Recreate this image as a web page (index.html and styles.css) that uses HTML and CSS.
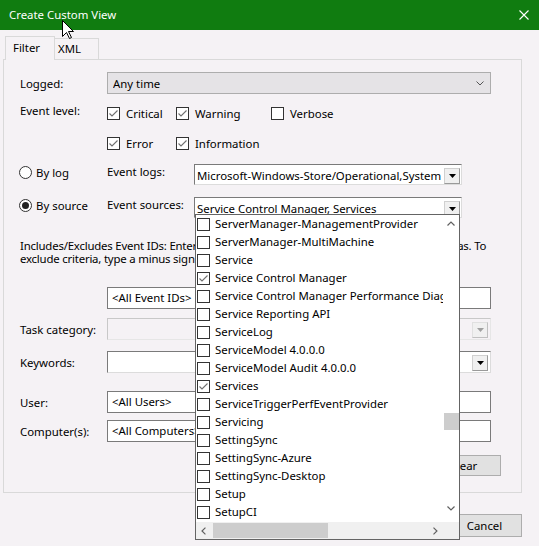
FILE: index.html
```html
<!DOCTYPE html>
<html>
<head>
<meta charset="utf-8">
<link rel="stylesheet" href="styles.css">
</head>
<body>
<div class="titlebar">
  <span class="title">Create Custom View</span>
  <svg class="close" width="10" height="10" viewBox="0 0 10 10"><path d="M0.5 0.5 L9.5 9.5 M9.5 0.5 L0.5 9.5" stroke="#fff" stroke-width="1.1" fill="none"/></svg>
</div>
<svg class="cursor" width="13" height="20" viewBox="0 0 13 20"><path d="M0.5 0.5 L0.5 16.5 L4.5 12.5 L7.5 18.5 L9.5 17.5 L6.5 11.5 L11.5 11.5 Z" fill="#fff" stroke="#000" stroke-width="1"/></svg>
<div class="dialog">
  <div class="tabs">
    <div class="tab active">Filter</div>
    <div class="tab">XML</div>
  </div>
  <div class="panel">
    <div class="row">
      <span class="label">Logged:</span>
      <div class="select">
        <span class="grow">Any time</span>
        <svg width="8" height="5" viewBox="0 0 8 5"><path d="M0.5 0.5 L4 4 L7.5 0.5" stroke="#555" fill="none" stroke-width="1"/></svg>
      </div>
    </div>
    <div class="levels">
      <span class="label level-label">Event level:</span>
      <div class="checks">
        <div class="chk"><span class="cb on"><svg viewBox="0 0 11 11"><path d="M1.5 5.5 L4 8 L9.5 2.5"/></svg></span>Critical</div>
        <div class="chk"><span class="cb on"><svg viewBox="0 0 11 11"><path d="M1.5 5.5 L4 8 L9.5 2.5"/></svg></span>Warning</div>
        <div class="chk"><span class="cb"></span>Verbose</div>
        <div class="chk"><span class="cb on"><svg viewBox="0 0 11 11"><path d="M1.5 5.5 L4 8 L9.5 2.5"/></svg></span>Error</div>
        <div class="chk"><span class="cb on"><svg viewBox="0 0 11 11"><path d="M1.5 5.5 L4 8 L9.5 2.5"/></svg></span>Information</div>
      </div>
    </div>
    <div class="srcrow">
      <div class="radio-label"><span class="radio"></span>By log</div>
      <span class="field-label">Event logs:</span>
      <div class="combo">
        <span class="grow">Microsoft-Windows-Store/Operational,System</span>
        <span class="dbtn"><svg width="7" height="4" viewBox="0 0 7 4"><path d="M0 0 H7 L3.5 4 Z" fill="#000"/></svg></span>
      </div>
    </div>
    <div class="srcrow second">
      <div class="radio-label"><span class="radio sel"></span>By source</div>
      <span class="field-label">Event sources:</span>
      <div class="combo source">
        <span class="grow">Service Control Manager, Services</span>
        <span class="dbtn"><svg width="7" height="4" viewBox="0 0 7 4"><path d="M0 0 H7 L3.5 4 Z" fill="#000"/></svg></span>
        <div class="dropdown">
          <div class="items">
            <div class="item"><span class="cb"></span>ServerManager-ManagementProvider</div>
            <div class="item"><span class="cb"></span>ServerManager-MultiMachine</div>
            <div class="item"><span class="cb"></span>Service</div>
            <div class="item"><span class="cb on"><svg viewBox="0 0 11 11"><path d="M1.5 5.5 L4 8 L9.5 2.5"/></svg></span>Service Control Manager</div>
            <div class="item"><span class="cb"></span>Service Control Manager Performance Diagnostic Provider</div>
            <div class="item"><span class="cb"></span>Service Reporting API</div>
            <div class="item"><span class="cb"></span>ServiceLog</div>
            <div class="item"><span class="cb"></span>ServiceModel 4.0.0.0</div>
            <div class="item"><span class="cb"></span>ServiceModel Audit 4.0.0.0</div>
            <div class="item"><span class="cb on"><svg viewBox="0 0 11 11"><path d="M1.5 5.5 L4 8 L9.5 2.5"/></svg></span>Services</div>
            <div class="item"><span class="cb"></span>ServiceTriggerPerfEventProvider</div>
            <div class="item"><span class="cb"></span>Servicing</div>
            <div class="item"><span class="cb"></span>SettingSync</div>
            <div class="item"><span class="cb"></span>SettingSync-Azure</div>
            <div class="item"><span class="cb"></span>SettingSync-Desktop</div>
            <div class="item"><span class="cb"></span>Setup</div>
            <div class="item"><span class="cb"></span>SetupCI</div>
          </div>
          <div class="vscroll">
            <svg width="8" height="5" viewBox="0 0 8 5"><path d="M0.5 4.5 L4 1 L7.5 4.5" stroke="#606060" fill="none" stroke-width="1.2"/></svg>
            <div class="vthumb"></div>
            <svg width="8" height="5" viewBox="0 0 8 5"><path d="M0.5 0.5 L4 4 L7.5 0.5" stroke="#606060" fill="none" stroke-width="1.2"/></svg>
          </div>
          <div class="hscroll">
            <svg width="5" height="8" viewBox="0 0 5 8"><path d="M4.5 0.5 L1 4 L4.5 7.5" stroke="#606060" fill="none" stroke-width="1.2"/></svg>
            <div class="hthumb"></div>
            <svg width="5" height="8" viewBox="0 0 5 8"><path d="M0.5 0.5 L4 4 L0.5 7.5" stroke="#606060" fill="none" stroke-width="1.2"/></svg>
          </div>
          <div class="corner"></div>
        </div>
      </div>
    </div>
    <p class="desc">Includes/Excludes Event IDs: Enter ID numbers and/or ID ranges separated by commas. To<br>exclude criteria, type a minus sign first. For example 1,3,5-99,-76</p>
    <div class="row ids">
      <span class="label"></span>
      <div class="input">&lt;All Event IDs&gt;</div>
    </div>
    <div class="row task">
      <span class="label">Task category:</span>
      <div class="combo wide disabled">
        <span class="grow"></span>
        <span class="dbtn"><svg width="7" height="4" viewBox="0 0 7 4"><path d="M0 0 H7 L3.5 4 Z" fill="#a0a0a0"/></svg></span>
      </div>
    </div>
    <div class="row kw">
      <span class="label">Keywords:</span>
      <div class="combo wide">
        <span class="grow"></span>
        <span class="dbtn"><svg width="7" height="4" viewBox="0 0 7 4"><path d="M0 0 H7 L3.5 4 Z" fill="#000"/></svg></span>
      </div>
    </div>
    <div class="row user">
      <span class="label">User:</span>
      <div class="input">&lt;All Users&gt;</div>
    </div>
    <div class="row comp">
      <span class="label">Computer(s):</span>
      <div class="input">&lt;All Computers&gt;</div>
    </div>
    <div class="clear-row">
      <div class="btn">Clear</div>
    </div>
  </div>
  <div class="buttons">
    <div class="btn">OK</div>
    <div class="btn">Cancel</div>
  </div>
</div>
</body>
</html>
```
FILE: styles.css
```css
* { box-sizing: border-box; }
html, body { margin: 0; padding: 0; }
body {
  width: 539px;
  height: 546px;
  overflow: hidden;
  position: relative;
  background: #f5f2f5;
  font-family: "Noto Sans", "Segoe UI", sans-serif;
  font-size: 11.4px;
  color: #000;
}
.titlebar {
  height: 30px;
  background: #107c10;
  color: #fff;
  display: flex;
  align-items: center;
  justify-content: space-between;
  padding: 0 10px 0 9px;
}
.title { line-height: 16px; }
.cursor { position: absolute; left: 62px; top: 20px; z-index: 10; }
.dialog { padding: 6px 17px 0 3px; }
.tabs { display: flex; align-items: flex-start; height: 23px; margin-left: 2px; }
.tab {
  height: 21px;
  margin-top: 2px;
  width: 44px;
  padding-left: 3px;
  border: 1px solid #d9d9d9;
  border-left: none;
  border-bottom: none;
  line-height: 20px;
}
.tab.active {
  position: relative;
  z-index: 2;
  height: 24px;
  margin-top: 0;
  width: 50px;
  padding-left: 7px;
  border-left: 1px solid #d9d9d9;
  background: #f5f2f5;
  line-height: 22px;
}
.panel {
  position: relative;
  height: 434px;
  border: 1px solid #d9d9d9;
  padding: 12px 20px 15px 16px;
}
.row { display: flex; align-items: center; }
.label { width: 87px; flex: none; }
.grow { flex: 1; overflow: hidden; white-space: nowrap; }
.select {
  width: 384px;
  height: 22px;
  background: #e5e3e6;
  border: 1px solid #adadad;
  display: flex;
  align-items: center;
  padding: 0 6px 0 5px;
}
.levels { display: flex; margin-top: 13px; }
.level-label { margin-top: -4px; }
.checks {
  display: grid;
  grid-template-columns: 69px 95px auto;
  row-gap: 17px;
}
.chk { display: flex; align-items: center; height: 13px; gap: 6px; white-space: nowrap; }
.cb {
  width: 13px;
  height: 13px;
  flex: none;
  border: 1px solid #333;
  background: #fff;
  display: flex;
}
.cb svg { width: 11px; height: 11px; }
.cb svg path { fill: none; stroke: #707070; stroke-width: 1.1; }
.srcrow { display: flex; align-items: flex-start; margin-top: 14px; height: 21px; }
.srcrow.second { margin-top: 12px; }
.radio-label {
  width: 88px;
  margin-left: -1px;
  display: flex;
  align-items: center;
  gap: 4px;
  height: 16px;
}
.radio {
  width: 13px;
  height: 13px;
  border: 1px solid #333;
  border-radius: 50%;
  background: #fff;
  display: flex;
  align-items: center;
  justify-content: center;
}
.radio.sel::after {
  content: "";
  width: 7px;
  height: 7px;
  border-radius: 50%;
  background: #222;
}
.field-label { width: 87px; line-height: 16px; }
.combo {
  position: relative;
  width: 268px;
  height: 21px;
  background: #fff;
  border: 1px solid;
  border-color: #7a7a7a #dcdcdc #dcdcdc #7a7a7a;
  display: flex;
  align-items: flex-start;
  padding: 3px 1px 0 2px;
  line-height: 16px;
}
.combo.wide { width: 384px; height: 22px; padding-right: 2px; }
.combo.disabled { background: transparent; border-color: #c8c8c8 #e6e6e6 #e6e6e6 #c8c8c8; }
.dbtn {
  width: 16px;
  height: 16px;
  flex: none;
  border: 1px solid;
  border-color: #d0d0d0 #9a9a9a #9a9a9a #d0d0d0;
  background: #f0f0f0;
  display: flex;
  align-items: center;
  justify-content: center;
}
.disabled .dbtn { border-color: #e0e0e0 #c0c0c0 #c0c0c0 #e0e0e0; }
.dropdown {
  position: absolute;
  left: 0;
  top: 16px;
  z-index: 5;
  width: 265px;
  height: 326px;
  background: #fff;
  border: 1px solid #646464;
  display: grid;
  grid-template-columns: 247px 16px;
  grid-template-rows: 307px 17px;
}
.items { overflow: hidden; padding-top: 0; }
.item {
  height: 18px;
  display: flex;
  align-items: center;
  gap: 5px;
  padding-left: 1px;
  white-space: nowrap;
  line-height: 16px;
}
.vscroll {
  display: flex;
  flex-direction: column;
  align-items: center;
  padding: 6px 0 6px 0;
}
.vthumb {
  width: 15px;
  height: 17px;
  background: #cdcdcd;
  margin: 187px 0 76px 1px;
}
.hscroll {
  background: #f0f0f0;
  display: flex;
  align-items: center;
  padding: 0 5px 0 5px;
}
.hthumb {
  width: 117px;
  height: 15px;
  background: #cdcdcd;
  margin: 0 105px 0 7px;
}
.corner { background: #f0f0f0; }
.desc { margin: 21px 0 0 0; line-height: 13px; white-space: nowrap; letter-spacing: -0.2px; }
.input {
  width: 384px;
  height: 22px;
  background: #fff;
  border: 1px solid #7a7a7a;
  padding-left: 4px;
  line-height: 20px;
}
.ids { margin-top: 22px; }
.task { margin-top: 9px; }
.kw { margin-top: 11px; }
.user { margin-top: 18px; }
.comp { margin-top: 7px; }
.clear-row { display: flex; justify-content: flex-end; margin-top: 13px; }
.btn {
  width: 75px;
  height: 21px;
  background: #e1e1e1;
  border: 1px solid #adadad;
  text-align: center;
  line-height: 19px;
}
.buttons { display: flex; justify-content: flex-end; gap: 6px; margin-top: 21px; }
.buttons .btn { height: 23px; line-height: 21px; }
```
